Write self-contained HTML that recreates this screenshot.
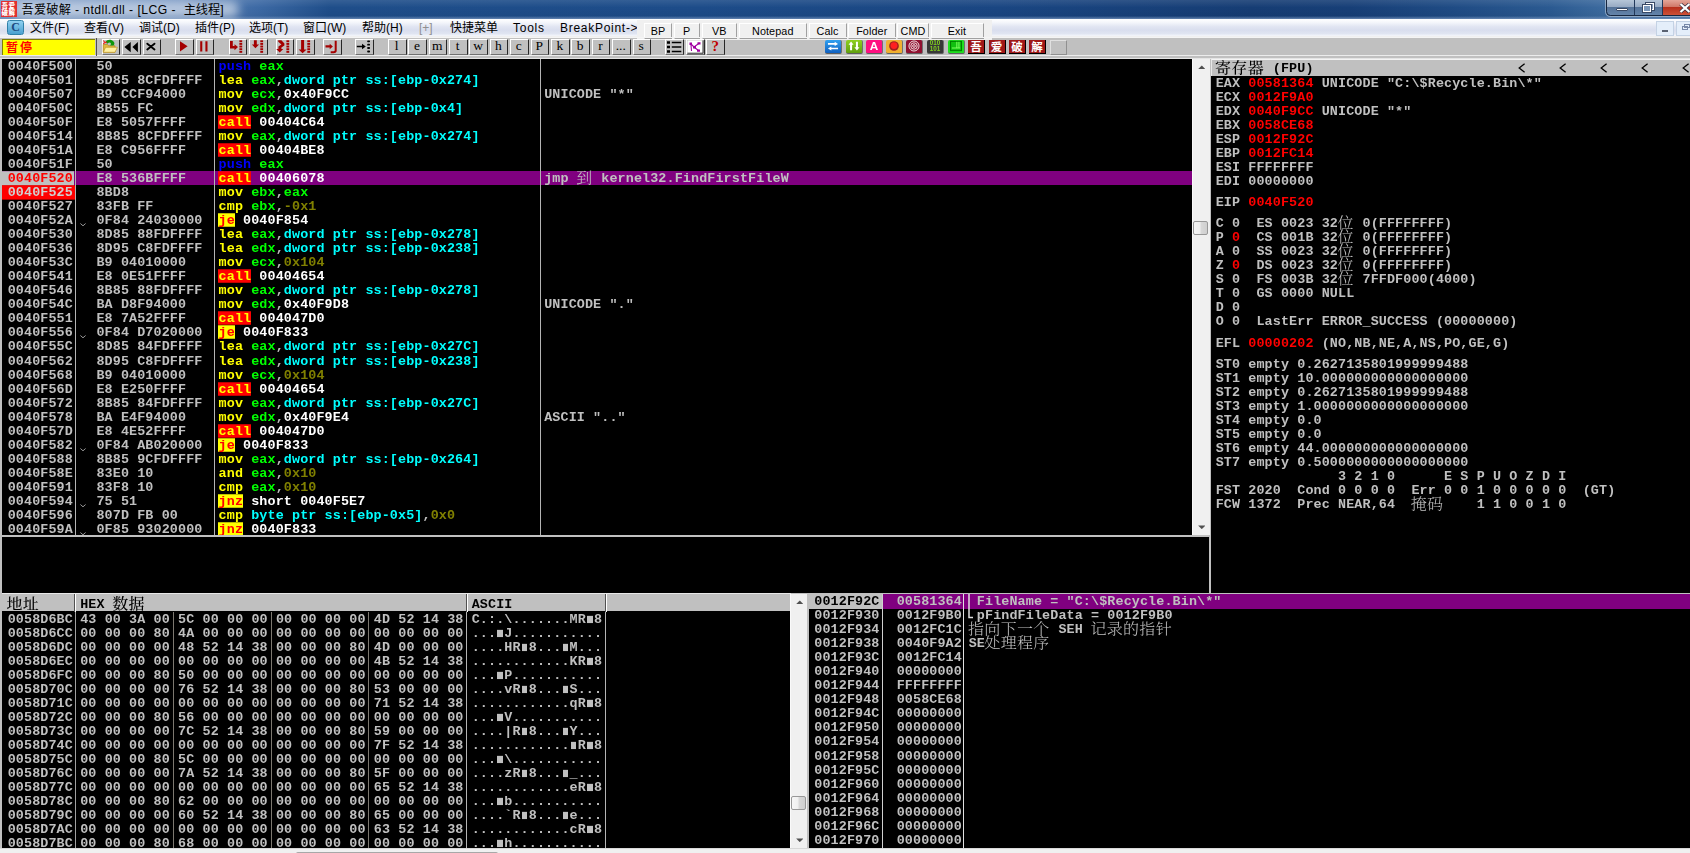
<!DOCTYPE html>
<html lang="zh-CN"><head><meta charset="utf-8"><title>吾爱破解 - ntdll.dll - [LCG - 主线程]</title>
<style>
html,body{margin:0;padding:0;}
body{width:1690px;height:853px;overflow:hidden;background:#c0c0c0;position:relative;font-family:"Liberation Sans","Noto Sans CJK SC",sans-serif;}
div,span,svg{box-sizing:border-box}
.abs{position:absolute}
.m{font-family:"Liberation Mono","Noto Serif CJK SC",monospace;font-weight:bold;font-size:13.4px;letter-spacing:0.12px;white-space:pre;line-height:14px;height:14px;color:#c0c0c0;position:absolute;top:0.6px;z-index:0;-webkit-text-stroke:0;margin-left:0.2px;transform:scaleY(0.9);transform-origin:0 10.57px}
.k{display:inline-block;width:16.32px;height:14px;letter-spacing:0;font-family:"Noto Serif CJK SC","Noto Sans CJK SC",serif;font-weight:300;font-size:16px;line-height:14px;text-align:center;vertical-align:top;position:relative;top:-1.9px;left:-0.8px;-webkit-text-stroke:0}
.pane{position:absolute;background:#000;overflow:hidden;will-change:transform}
.r{position:absolute;left:0;width:100%;height:14.1px}
.vl{position:absolute;width:1px;background:#b4b4b4}
/* disasm columns (relative to pane left=2) */
#dis .a{left:5.5px}
#dis .h{left:94.25px}
#dis .d{left:216.4px}
#dis .cm{left:542px}
#dis .jm{position:absolute;left:77.5px;top:9.5px}
#dis .sel{background:#800080}
#dis .aeip{top:-1.17px;height:15.61px;padding-top:1.77px;transform-origin:0 12.34px;left:-2px;padding-left:7.5px;width:74px;background:#c0c0c0;color:#ff0000}
#dis .abp{top:-1.17px;height:15.61px;padding-top:1.77px;transform-origin:0 12.34px;left:0;padding-left:5.5px;width:72.5px;background:#ff0000;color:#d0d0d0}
.b{color:#0000ff}.y{color:#ffff00}.g{color:#00ff00}.c{color:#00ffff}.w{color:#ffffff}.o{color:#808000}.rd{color:#ff0000}
.cl,.jc{position:relative}
.cl{color:#ffff00}.jc{color:#ff0000}
.cl::before,.jc::before{content:"";position:absolute;left:-0.3px;right:0.3px;top:-1.25px;height:15.61px;z-index:-1}
.cl::before{background:#ff0000}.jc::before{background:#ffff00}
/* registers */
#reg .rg{left:4.5px}
/* dump */
#dump .a{left:5.5px}
#dump .dh{left:78px}
#dump .da{left:469.5px}
.bx{display:inline-block;width:5.6px;height:8.9px;background:#c0c0c0;margin:0 1.28px;vertical-align:top;position:relative;top:1.6px}
/* stack */
#stk .sa{left:5.1px}
#stk .sv{left:87.5px}
#stk .sc{left:159.5px}
#stk .ssel{background:#800080}
#stk .ssel .sa{color:#000}
.sabg{position:absolute;left:-2px;top:-1.5px;width:74.5px;height:16px;background:#c0c0c0}
.hdr{position:absolute;background:#c0c0c0;color:#000}
.hdr .m{color:#000}
.hdr .k{color:#000;font-weight:500}
/* scrollbars */
.sb{position:absolute;background:#f0f0f0;border-left:1px solid #fafafa}
.thumb{position:absolute;border:1px solid #989898;border-radius:2px;background:linear-gradient(90deg,#f6f6f6 0%,#f0f0f0 45%,#d8d8d8 55%,#cfcfcf 100%)}
/* toolbar */
.tb{position:absolute;top:38.7px;height:16px;width:18.5px;background:#c0c0c0;border-top:1.2px solid #fff;border-left:1.2px solid #fff;border-right:1.3px solid #282828;border-bottom:1.3px solid #707070}
.tb svg{position:absolute;left:0;top:0}
.tl{font-family:"Liberation Serif",serif;font-size:13.5px;color:#000;text-align:center;line-height:12.5px;padding-right:1px}
.pb{position:absolute;top:22.6px;height:16.8px;background:#f0f0f0;border-top:1px solid #fff;border-left:1px solid #fff;border-right:1.5px solid #a0a0a0;border-bottom:1.5px solid #a0a0a0;font-size:10.8px;letter-spacing:0.1px;line-height:15.5px;text-align:center;color:#000;font-family:"Liberation Sans",sans-serif}
.mi{position:absolute;top:19.5px;height:16px;line-height:16px;font-size:12px;color:#000;white-space:pre;font-family:"Liberation Sans","Noto Sans CJK SC",sans-serif}
</style></head><body>
<div class="abs" style="left:0;top:0;width:1690px;height:19px;background:linear-gradient(90deg,#7d9bc6 0px,#6f90bf 40px,#5f84b8 180px,#3c69a4 260px,#1f4e8a 330px,#1d4c89 700px,#1a4682 1000px,#163d74 1250px,#173f77 1350px,#1f4b84 1450px,#2b5a91 1550px,#3d6b9f 1606px)"></div>
<div class="abs" style="left:0;top:0;width:1690px;height:19px;background:linear-gradient(rgba(255,255,255,0.10),rgba(255,255,255,0) 40%,rgba(0,0,0,0.05) 90%,rgba(0,0,20,0.35))"></div>
<div class="abs" style="left:0;top:16.3px;width:1690px;height:2.4px;background:linear-gradient(rgba(130,165,210,0),rgba(130,165,210,0.75))"></div><div class="abs" style="left:0;top:18.6px;width:1690px;height:0.9px;background:#566880"></div>
<div class="abs" style="left:14px;top:1px;width:225px;height:17px;background:rgba(255,255,255,0.55);filter:blur(5px);border-radius:8px"></div>
<div class="abs" style="left:0.5px;top:1px;width:16px;height:16px;background:#e03030;color:#fff;font-size:6.5px;line-height:7.5px;font-weight:900;font-family:'Noto Sans CJK SC',sans-serif;overflow:hidden;text-align:center;letter-spacing:0.5px;padding-top:0.5px">吾爱<br>破解</div>
<div class="abs" style="left:21.5px;top:1.5px;height:17px;line-height:17px;font-size:12.2px;color:#000;white-space:pre;font-family:'Liberation Sans','Noto Sans CJK SC',sans-serif"><span style="letter-spacing:0.2px">吾爱破解</span><span style="letter-spacing:0.45px"> - ntdll.dll - [LCG -  </span><span>主线程]</span></div>
<div class="abs" style="left:1606px;top:-1px;width:90px;height:16.5px;border:1px solid #16263f;border-radius:0 0 0 4.5px;background:linear-gradient(#b6c6d8 0%,#98abc4 45%,#557399 50%,#6484aa 100%);box-shadow:0 0 0 1px rgba(255,255,255,0.4)"></div>
<div class="abs" style="left:1662.5px;top:0;width:30px;height:14.5px;background:linear-gradient(#e4a598 0%,#d07868 45%,#b8301c 50%,#cc5238 100%)"></div>
<div class="abs" style="left:1634px;top:0;width:1.2px;height:14.5px;background:#22385a"></div>
<div class="abs" style="left:1662px;top:0;width:1.2px;height:14.5px;background:#22385a"></div>
<div class="abs" style="left:1616px;top:8px;width:11.5px;height:3.2px;background:#fff;border:0.6px solid #3a4a66;border-radius:1px"></div>
<div class="abs" style="left:1645.5px;top:3px;width:8.5px;height:7px;border:1.6px solid #fff;outline:0.6px solid #3a4a66;background:#8aa2c2"></div>
<div class="abs" style="left:1642.5px;top:5.3px;width:8.5px;height:7px;border:1.6px solid #fff;outline:0.6px solid #3a4a66;background:#7c98ba"></div>
<svg class="abs" style="left:1679px;top:3px" width="12" height="10" viewBox="0 0 12 10"><path d="M1.5 1 L10.5 9 M10.5 1 L1.5 9" stroke="#3a3040" stroke-width="3.6"/><path d="M1.5 1 L10.5 9 M10.5 1 L1.5 9" stroke="#fff" stroke-width="2.3"/></svg>
<div class="abs" style="left:0;top:18.5px;width:1690px;height:18px;background:linear-gradient(#ffffff 0%,#f4f6fb 20%,#e1e5f2 45%,#d9deee 65%,#dfe4f1 85%,#f4f6fb 100%);border-bottom:1px solid #f0f0f0"></div>
<div class="abs" style="left:7px;top:20px;width:17px;height:14.5px;border:1px solid #3080a8;border-radius:2.5px;background:linear-gradient(#8fd0f0,#4aa0d0);font-family:'Liberation Serif',serif;font-weight:bold;font-size:12px;line-height:12px;color:#1c4a80;text-align:center">C</div>
<div class="mi" style="left:30px">文件(F)</div>
<div class="mi" style="left:84px">查看(V)</div>
<div class="mi" style="left:139px">调试(D)</div>
<div class="mi" style="left:195px">插件(P)</div>
<div class="mi" style="left:249px">选项(T)</div>
<div class="mi" style="left:303px">窗口(W)</div>
<div class="mi" style="left:362px">帮助(H)</div>
<div class="mi" style="left:419px;color:#909090">[+]</div>
<div class="mi" style="left:450px">快捷菜单</div>
<div class="mi" style="left:513px;font-size:12px;letter-spacing:0.75px">Tools</div>
<div class="mi" style="left:560px;font-size:12px;letter-spacing:0.72px">BreakPoint-&gt;</div>
<div class="abs" style="left:637px;top:20px;width:354.5px;height:20.4px;background:#f0f0f0"></div>
<div class="pb" style="left:644px;width:28px">BP</div>
<div class="pb" style="left:673.5px;width:26.5px">P</div>
<div class="pb" style="left:701.5px;width:35.5px">VB</div>
<div class="pb" style="left:738.5px;width:68.5px">Notepad</div>
<div class="pb" style="left:808.5px;width:38px">Calc</div>
<div class="pb" style="left:848px;width:47.5px">Folder</div>
<div class="pb" style="left:897px;width:32px">CMD</div>
<div class="pb" style="left:930.5px;width:53px">Exit</div>
<div class="abs" style="left:1656px;top:20.5px;width:17.5px;height:15px;background:#e4eefa;border:1px solid #c4d2e4"></div><div class="abs" style="left:1661.5px;top:30px;width:6px;height:1.5px;background:#5a6272"></div>
<div class="abs" style="left:1675.5px;top:20.5px;width:17.5px;height:15px;background:#e4eefa;border:1px solid #c4d2e4"></div><div class="abs" style="left:1682px;top:26px;width:6px;height:4px;border:1px solid #7888a8;border-top-width:1.5px"></div><div class="abs" style="left:1684px;top:24px;width:6px;height:4px;border:1px solid #7888a8;border-top-width:1.5px"></div>
<div class="abs" style="left:0;top:37px;width:1690px;height:1px;background:#f4f4f4"></div>
<div class="abs" style="left:0;top:54.5px;width:1690px;height:1px;background:#ececec"></div>
<div class="abs" style="left:0;top:57.8px;width:1690px;height:1px;background:#e4e4e4"></div>
<div class="abs" style="left:2px;top:38.5px;width:93px;height:16.5px;background:#ffff00;border-top:1px solid #808000;border-left:1px solid #808000"></div>
<div class="abs" style="left:6px;top:38px;height:17px;line-height:17px;font-size:12px;color:#ff0000;font-weight:bold;letter-spacing:2px;font-family:'Noto Sans CJK SC',sans-serif">暂停</div>
<div class="abs" style="left:96.2px;top:38px;width:1px;height:18px;background:#505050"></div>
<div class="tb" style="left:101.5px;"><svg width="18.5" height="16" viewBox="0 0 18.5 16" style="left:-1.2px;top:-1.2px"><path d="M2.2 5.5 L6.5 5.5 L7.5 6.8 L14 6.8 L14 13.2 L2.2 13.2 Z" fill="#e0b840" stroke="#b08820" stroke-width="0.7"/><path d="M4.6 8.3 L16.4 8.3 L14 13.3 L2.3 13.3 Z" fill="#fff0a0" stroke="#c09828" stroke-width="0.7"/><path d="M4.5 3.2 C6 0.2 10.5 0.2 12.5 2.5 C13.8 3.6 13.6 5.4 12.6 6.4 L9 6.4 C10.5 5 10 3.6 8.5 3.4 C7.5 3.3 6.5 4.2 6.2 4.8 Z" fill="#0c960c"/><path d="M2 1.6 L4.6 3.6 L2 4.8 M3 3.4 L6 3.2" stroke="#ff1818" stroke-width="0.9" fill="none"/></svg></div>
<div class="tb" style="left:122px;"><svg width="18.5" height="16" viewBox="0 0 18.5 16" style="left:-1.2px;top:-1.2px"><path d="M2.4 8.1 L8.7 3 L8.7 13.2 Z M10.4 8.1 L15.9 3 L15.9 13.2 Z" fill="#000"/></svg></div>
<div class="tb" style="left:142.5px;"><svg width="18.5" height="16" viewBox="0 0 18.5 16" style="left:-1.2px;top:-1.2px"><path d="M5.3 4.7 L12.5 10.4 M12.5 4.7 L5.3 10.4" stroke="#000" stroke-width="1.9" stroke-linecap="round"/></svg></div>
<div class="tb" style="left:175px;"><svg width="18.5" height="16" viewBox="0 0 18.5 16" style="left:-1.2px;top:-1.2px"><path d="M5 2.3 L12.6 7.3 L5 12.4 Z" fill="#a40000"/></svg></div>
<div class="tb" style="left:195.5px;"><svg width="18.5" height="16" viewBox="0 0 18.5 16" style="left:-1.2px;top:-1.2px"><path d="M5.2 2.3 H7.3 V12.4 H5.2 Z M10.4 2.3 H12.5 V12.4 H10.4 Z" fill="#a40000"/></svg></div>
<div class="tb" style="left:228.5px;"><svg width="18.5" height="16" viewBox="0 0 18.5 16" style="left:-1.2px;top:-1.2px"><path d="M2 2 H4.8 V7 H6.5 V5.2 L10 8.1 L6.5 11.3 V9.6 H2 Z" fill="#a40000"/><rect x="11.4" y="1.3" width="2.8" height="1.9" fill="#a40000"/><rect x="11.4" y="3.95" width="2.8" height="1.9" fill="#a40000"/><rect x="11.4" y="6.6" width="2.8" height="1.9" fill="#a40000"/><rect x="11.4" y="9.25" width="2.8" height="1.9" fill="#a40000"/><rect x="11.4" y="11.9" width="2.8" height="1.9" fill="#a40000"/></svg></div>
<div class="tb" style="left:249px;"><svg width="18.5" height="16" viewBox="0 0 18.5 16" style="left:-1.2px;top:-1.2px"><path d="M4.9 1.3 H7.8 V5.5 H10.1 L6.4 9.3 L2.9 5.5 H4.9 Z" fill="#a40000"/><rect x="11.3" y="1.3" width="2.8" height="1.9" fill="#a40000"/><rect x="11.3" y="3.95" width="2.8" height="1.9" fill="#a40000"/><rect x="11.3" y="6.6" width="2.8" height="1.9" fill="#a40000"/><rect x="11.3" y="9.25" width="2.8" height="1.9" fill="#a40000"/><rect x="11.3" y="11.9" width="2.8" height="1.9" fill="#a40000"/></svg></div>
<div class="tb" style="left:275.5px;"><svg width="18.5" height="16" viewBox="0 0 18.5 16" style="left:-1.2px;top:-1.2px"><path d="M3.2 1.3 H6.4 L9.4 4.4 V6.4 L6.4 8.4 L6.4 10 H8.3 L4.7 13.4 L1.2 10 H3.4 V7.4 L6.4 5.4 L3.2 2.8 Z" fill="#a40000"/><rect x="11.4" y="1.3" width="2.8" height="1.9" fill="#a40000"/><rect x="11.4" y="3.95" width="2.8" height="1.9" fill="#a40000"/><rect x="11.4" y="6.6" width="2.8" height="1.9" fill="#a40000"/><rect x="11.4" y="9.25" width="2.8" height="1.9" fill="#a40000"/><rect x="11.4" y="11.9" width="2.8" height="1.9" fill="#a40000"/></svg></div>
<div class="tb" style="left:296px;"><svg width="18.5" height="16" viewBox="0 0 18.5 16" style="left:-1.2px;top:-1.2px"><path d="M5.1 1 H8.1 V10.5 H10.6 L6.6 14.3 L2.6 10.5 H5.1 Z" fill="#a40000"/><rect x="11.3" y="1.3" width="2.8" height="1.9" fill="#a40000"/><rect x="11.3" y="3.95" width="2.8" height="1.9" fill="#a40000"/><rect x="11.3" y="6.6" width="2.8" height="1.9" fill="#a40000"/><rect x="11.3" y="9.25" width="2.8" height="1.9" fill="#a40000"/><rect x="11.3" y="11.9" width="2.8" height="1.9" fill="#a40000"/></svg></div>
<div class="tb" style="left:323px;"><svg width="18.5" height="16" viewBox="0 0 18.5 16" style="left:-1.2px;top:-1.2px"><path d="M2.5 6.3 H6.7 V4.8 L9.9 7.5 L6.7 10.3 V8.6 H2.5 Z" fill="#a40000"/><path d="M12.7 1.8 V11.5 Q12.7 13.3 10.5 13.3 H7.7" stroke="#a40000" stroke-width="2" fill="none"/></svg></div>
<div class="tb" style="left:355px;"><svg width="18.5" height="16" viewBox="0 0 18.5 16" style="left:-1.2px;top:-1.2px"><path d="M1.8 6.8 H7 V4.8 L10.8 7.5 L7 10.3 V8.3 H1.8 Z" fill="#000"/><rect x="12.2" y="1.4" width="2.8" height="1.9" rx="0.7" fill="#000"/><rect x="12.2" y="4.7" width="2.8" height="1.9" rx="0.7" fill="#000"/><rect x="12.2" y="8.0" width="2.8" height="1.9" rx="0.7" fill="#000"/><rect x="12.2" y="11.6" width="2.8" height="1.9" rx="0.7" fill="#000"/></svg></div>
<div class="tb tl" style="left:388px">l</div>
<div class="tb tl" style="left:408.3px">e</div>
<div class="tb tl" style="left:428.5px">m</div>
<div class="tb tl" style="left:449px">t</div>
<div class="tb tl" style="left:469.3px">w</div>
<div class="tb tl" style="left:489.7px">h</div>
<div class="tb tl" style="left:510px">c</div>
<div class="tb tl" style="left:530.5px">P</div>
<div class="tb tl" style="left:551px">k</div>
<div class="tb tl" style="left:571.3px">b</div>
<div class="tb tl" style="left:591.7px">r</div>
<div class="tb tl" style="left:612px">...</div>
<div class="tb tl" style="left:632.5px">s</div>
<div class="tb" style="left:665px;"><svg width="18.5" height="16" viewBox="0 0 18.5 16" style="left:-1.2px;top:-1.2px"><path d="M2 2.2 H5 V4.8 H2 Z M2 6.7 H5 V9.3 H2 Z M2 11.2 H5 V13.8 H2 Z" fill="#000"/><path d="M6.8 3.5 H16.3 M6.8 8 H16.3 M6.8 12.5 H16.3" stroke="#000" stroke-width="1.5"/></svg></div>
<div class="tb" style="left:686px;"><svg width="18.5" height="16" viewBox="0 0 18.5 16" style="left:-1.2px;top:-1.2px"><rect x="1.4" y="1.4" width="15.6" height="13" fill="#fff"/><path d="M1.4 14.2 H17 V1.4" fill="none" stroke="#202020" stroke-width="0.9"/><path d="M3.5 3.5 H6 V6 H3.5Z M11.5 3.3 H14.5 V5.5 H11.5Z M7 7 H10 V9.5 H7Z M11 10.5 H14 V12.8 H11Z" fill="#a000a0"/><path d="M5 5 L8 8 L12.8 4.5 M8.5 8.5 L12.5 11.5 M5 6 L5.5 12" stroke="#a000a0" stroke-width="1.1" fill="none"/></svg></div>
<div class="tb" style="left:706px;font-family:'Liberation Serif',serif;font-weight:bold;font-size:15px;line-height:13.5px;text-align:center;color:#c00000">?</div>
<div class="abs" style="left:825px;top:39.8px;width:17px;height:14.4px;background:linear-gradient(#30a0f0,#1060c0);border-radius:2px;border-right:1px solid #707070;border-bottom:1.2px solid #606060;overflow:hidden"><div style="position:absolute;left:0;top:-0.6px;width:16px;height:14px;transform:scale(0.84)"><svg width="16" height="14" viewBox="0 0 16 14"><path d="M2 3.5 H10 V2 L14 4.5 L10 7 V5.5 H2 Z M14 9 H6 V7.5 L2 10 L6 12.5 V11 H14 Z" fill="#fff"/></svg></div></div>
<div class="abs" style="left:845.5px;top:39.8px;width:17px;height:14.4px;background:linear-gradient(#90d020,#60a010);border-radius:2px;border-right:1px solid #707070;border-bottom:1.2px solid #606060;overflow:hidden"><div style="position:absolute;left:0;top:-0.6px;width:16px;height:14px;transform:scale(0.84)"><svg width="16" height="14" viewBox="0 0 16 14"><path d="M4.5 1.5 L7.5 5.5 H5.7 V12 H3.3 V5.5 H1.5 Z M11.5 12.5 L8.5 8.5 H10.3 V2 H12.7 V8.5 H14.5 Z" fill="#fff"/></svg></div></div>
<div class="abs" style="left:865.5px;top:39.8px;width:17px;height:14.4px;background:#ff1080;border-radius:2px;border-right:1px solid #707070;border-bottom:1.2px solid #606060;overflow:hidden"><div style="position:absolute;left:0;top:-0.6px;width:16px;height:14px;transform:scale(0.84)"><div style="color:#fff;font-weight:bold;font-size:14px;line-height:14px;text-align:center;font-family:'Liberation Sans',sans-serif">A</div></div></div>
<div class="abs" style="left:886px;top:39.8px;width:17px;height:14.4px;background:#f0b030;border-radius:2px;border-right:1px solid #707070;border-bottom:1.2px solid #606060;overflow:hidden"><div style="position:absolute;left:0;top:-0.6px;width:16px;height:14px;transform:scale(0.84)"><svg width="16" height="14" viewBox="0 0 16 14"><circle cx="8" cy="7" r="5.8" fill="#a02020"/><circle cx="8" cy="6.5" r="4" fill="#ff2020"/></svg></div></div>
<div class="abs" style="left:906px;top:39.8px;width:17px;height:14.4px;background:#901030;border-radius:2px;border-right:1px solid #707070;border-bottom:1.2px solid #606060;overflow:hidden"><div style="position:absolute;left:0;top:-0.6px;width:16px;height:14px;transform:scale(0.84)"><svg width="16" height="14" viewBox="0 0 16 14"><circle cx="8" cy="7" r="6" fill="none" stroke="#fff" stroke-width="1"/><circle cx="8" cy="7" r="3.8" fill="none" stroke="#fff" stroke-width="1"/><circle cx="8" cy="7" r="1.6" fill="none" stroke="#fff" stroke-width="1"/></svg></div></div>
<div class="abs" style="left:927px;top:39.8px;width:17px;height:14.4px;background:#383838;border-radius:2px;border-right:1px solid #707070;border-bottom:1.2px solid #606060;overflow:hidden"><div style="position:absolute;left:0;top:-0.6px;width:16px;height:14px;transform:scale(0.84)"><div style="color:#80d020;font-weight:bold;font-size:7.5px;line-height:7px;text-align:center;font-family:'Liberation Sans',sans-serif">010<br>101</div></div></div>
<div class="abs" style="left:947.5px;top:39.8px;width:17px;height:14.4px;background:#20e020;border-radius:2px;border-right:1px solid #707070;border-bottom:1.2px solid #606060;overflow:hidden"><div style="position:absolute;left:0;top:-0.6px;width:16px;height:14px;transform:scale(0.84)"><svg width="16" height="14" viewBox="0 0 16 14"><rect x="1.5" y="1.5" width="13" height="11" fill="#10c010" stroke="#008000" stroke-width="1.3"/><path d="M3 9.5 H13 M9 2 V9.5 M11.5 2 V9.5" stroke="#80ff60" stroke-width="1.2" fill="none"/></svg></div></div>
<div class="abs" style="left:968px;top:39.8px;width:17px;height:14.4px;background:#a01818;border-right:1.5px solid #000;border-bottom:1.5px solid #000;color:#fff;font-weight:700;font-size:11.5px;line-height:12.5px;text-align:center;font-family:'Noto Sans CJK SC',sans-serif;overflow:hidden">吾</div>
<div class="abs" style="left:988.5px;top:39.8px;width:17px;height:14.4px;background:#a01818;border-right:1.5px solid #000;border-bottom:1.5px solid #000;color:#fff;font-weight:700;font-size:11.5px;line-height:12.5px;text-align:center;font-family:'Noto Sans CJK SC',sans-serif;overflow:hidden">爱</div>
<div class="abs" style="left:1009px;top:39.8px;width:17px;height:14.4px;background:#a01818;border-right:1.5px solid #000;border-bottom:1.5px solid #000;color:#fff;font-weight:700;font-size:11.5px;line-height:12.5px;text-align:center;font-family:'Noto Sans CJK SC',sans-serif;overflow:hidden">破</div>
<div class="abs" style="left:1029px;top:39.8px;width:17px;height:14.4px;background:#a01818;border-right:1.5px solid #000;border-bottom:1.5px solid #000;color:#fff;font-weight:700;font-size:11.5px;line-height:12.5px;text-align:center;font-family:'Noto Sans CJK SC',sans-serif;overflow:hidden">解</div>
<div class="abs" style="left:1049.5px;top:39.5px;width:17.5px;height:15px;background:#c0c0c0;border-top:1px solid #e0e0e0;border-left:1px solid #e0e0e0;border-right:1px solid #909090;border-bottom:1px solid #909090"></div>
<div id="dis" class="pane" style="left:2px;top:58.8px;width:1189.5px;height:476.3px"><div style="position:absolute;left:0;top:-58.8px;width:100%;height:600px">
<div class="r" style="top:58.8px">
<span class="m a">0040F500</span>
<span class="m h">50</span>
<span class="m d"><span class="b">push</span> <span class="g">eax</span></span>
</div>
<div class="r" style="top:72.84px">
<span class="m a">0040F501</span>
<span class="m h">8D85 8CFDFFFF</span>
<span class="m d"><span class="y">lea</span> <span class="g">eax</span>,<span class="c">dword ptr ss:[ebp-0x274]</span></span>
</div>
<div class="r" style="top:86.89px">
<span class="m a">0040F507</span>
<span class="m h">B9 CCF94000</span>
<span class="m d"><span class="y">mov</span> <span class="g">ecx</span>,<span class="w">0x40F9CC</span></span>
<span class="m cm">UNICODE "*"</span>
</div>
<div class="r" style="top:100.94px">
<span class="m a">0040F50C</span>
<span class="m h">8B55 FC</span>
<span class="m d"><span class="y">mov</span> <span class="g">edx</span>,<span class="c">dword ptr ss:[ebp-0x4]</span></span>
</div>
<div class="r" style="top:114.98px">
<span class="m a">0040F50F</span>
<span class="m h">E8 5057FFFF</span>
<span class="m d"><span class="cl">call</span> <span class="w">00404C64</span></span>
</div>
<div class="r" style="top:129.02px">
<span class="m a">0040F514</span>
<span class="m h">8B85 8CFDFFFF</span>
<span class="m d"><span class="y">mov</span> <span class="g">eax</span>,<span class="c">dword ptr ss:[ebp-0x274]</span></span>
</div>
<div class="r" style="top:143.07px">
<span class="m a">0040F51A</span>
<span class="m h">E8 C956FFFF</span>
<span class="m d"><span class="cl">call</span> <span class="w">00404BE8</span></span>
</div>
<div class="r" style="top:157.12px">
<span class="m a">0040F51F</span>
<span class="m h">50</span>
<span class="m d"><span class="b">push</span> <span class="g">eax</span></span>
</div>
<div class="r sel" style="top:171.16px">
<span class="m a aeip">0040F520</span>
<span class="m h">E8 536BFFFF</span>
<span class="m d"><span class="cl">call</span> <span class="w">00406078</span></span>
<span class="m cm">jmp <span class="k">到</span> kernel32.FindFirstFileW</span>
</div>
<div class="r" style="top:185.2px">
<span class="m a abp">0040F525</span>
<span class="m h">8BD8</span>
<span class="m d"><span class="y">mov</span> <span class="g">ebx</span>,<span class="g">eax</span></span>
</div>
<div class="r" style="top:199.25px">
<span class="m a">0040F527</span>
<span class="m h">83FB FF</span>
<span class="m d"><span class="y">cmp</span> <span class="g">ebx</span>,<span class="o">-0x1</span></span>
</div>
<div class="r" style="top:213.3px">
<span class="m a">0040F52A</span>
<svg class="jm" width="6" height="4" viewBox="0 0 6 4"><path d="M0.4 0.5 L3 2.8 L5.6 0.5" fill="none" stroke="#a8a8a8" stroke-width="0.9"/></svg>
<span class="m h">0F84 24030000</span>
<span class="m d"><span class="jc">je</span> <span class="w">0040F854</span></span>
</div>
<div class="r" style="top:227.34px">
<span class="m a">0040F530</span>
<span class="m h">8D85 88FDFFFF</span>
<span class="m d"><span class="y">lea</span> <span class="g">eax</span>,<span class="c">dword ptr ss:[ebp-0x278]</span></span>
</div>
<div class="r" style="top:241.38px">
<span class="m a">0040F536</span>
<span class="m h">8D95 C8FDFFFF</span>
<span class="m d"><span class="y">lea</span> <span class="g">edx</span>,<span class="c">dword ptr ss:[ebp-0x238]</span></span>
</div>
<div class="r" style="top:255.43px">
<span class="m a">0040F53C</span>
<span class="m h">B9 04010000</span>
<span class="m d"><span class="y">mov</span> <span class="g">ecx</span>,<span class="o">0x104</span></span>
</div>
<div class="r" style="top:269.48px">
<span class="m a">0040F541</span>
<span class="m h">E8 0E51FFFF</span>
<span class="m d"><span class="cl">call</span> <span class="w">00404654</span></span>
</div>
<div class="r" style="top:283.52px">
<span class="m a">0040F546</span>
<span class="m h">8B85 88FDFFFF</span>
<span class="m d"><span class="y">mov</span> <span class="g">eax</span>,<span class="c">dword ptr ss:[ebp-0x278]</span></span>
</div>
<div class="r" style="top:297.56px">
<span class="m a">0040F54C</span>
<span class="m h">BA D8F94000</span>
<span class="m d"><span class="y">mov</span> <span class="g">edx</span>,<span class="w">0x40F9D8</span></span>
<span class="m cm">UNICODE "."</span>
</div>
<div class="r" style="top:311.61px">
<span class="m a">0040F551</span>
<span class="m h">E8 7A52FFFF</span>
<span class="m d"><span class="cl">call</span> <span class="w">004047D0</span></span>
</div>
<div class="r" style="top:325.66px">
<span class="m a">0040F556</span>
<svg class="jm" width="6" height="4" viewBox="0 0 6 4"><path d="M0.4 0.5 L3 2.8 L5.6 0.5" fill="none" stroke="#a8a8a8" stroke-width="0.9"/></svg>
<span class="m h">0F84 D7020000</span>
<span class="m d"><span class="jc">je</span> <span class="w">0040F833</span></span>
</div>
<div class="r" style="top:339.7px">
<span class="m a">0040F55C</span>
<span class="m h">8D85 84FDFFFF</span>
<span class="m d"><span class="y">lea</span> <span class="g">eax</span>,<span class="c">dword ptr ss:[ebp-0x27C]</span></span>
</div>
<div class="r" style="top:353.75px">
<span class="m a">0040F562</span>
<span class="m h">8D95 C8FDFFFF</span>
<span class="m d"><span class="y">lea</span> <span class="g">edx</span>,<span class="c">dword ptr ss:[ebp-0x238]</span></span>
</div>
<div class="r" style="top:367.79px">
<span class="m a">0040F568</span>
<span class="m h">B9 04010000</span>
<span class="m d"><span class="y">mov</span> <span class="g">ecx</span>,<span class="o">0x104</span></span>
</div>
<div class="r" style="top:381.84px">
<span class="m a">0040F56D</span>
<span class="m h">E8 E250FFFF</span>
<span class="m d"><span class="cl">call</span> <span class="w">00404654</span></span>
</div>
<div class="r" style="top:395.88px">
<span class="m a">0040F572</span>
<span class="m h">8B85 84FDFFFF</span>
<span class="m d"><span class="y">mov</span> <span class="g">eax</span>,<span class="c">dword ptr ss:[ebp-0x27C]</span></span>
</div>
<div class="r" style="top:409.93px">
<span class="m a">0040F578</span>
<span class="m h">BA E4F94000</span>
<span class="m d"><span class="y">mov</span> <span class="g">edx</span>,<span class="w">0x40F9E4</span></span>
<span class="m cm">ASCII ".."</span>
</div>
<div class="r" style="top:423.97px">
<span class="m a">0040F57D</span>
<span class="m h">E8 4E52FFFF</span>
<span class="m d"><span class="cl">call</span> <span class="w">004047D0</span></span>
</div>
<div class="r" style="top:438.01px">
<span class="m a">0040F582</span>
<svg class="jm" width="6" height="4" viewBox="0 0 6 4"><path d="M0.4 0.5 L3 2.8 L5.6 0.5" fill="none" stroke="#a8a8a8" stroke-width="0.9"/></svg>
<span class="m h">0F84 AB020000</span>
<span class="m d"><span class="jc">je</span> <span class="w">0040F833</span></span>
</div>
<div class="r" style="top:452.06px">
<span class="m a">0040F588</span>
<span class="m h">8B85 9CFDFFFF</span>
<span class="m d"><span class="y">mov</span> <span class="g">eax</span>,<span class="c">dword ptr ss:[ebp-0x264]</span></span>
</div>
<div class="r" style="top:466.11px">
<span class="m a">0040F58E</span>
<span class="m h">83E0 10</span>
<span class="m d"><span class="y">and</span> <span class="g">eax</span>,<span class="o">0x10</span></span>
</div>
<div class="r" style="top:480.15px">
<span class="m a">0040F591</span>
<span class="m h">83F8 10</span>
<span class="m d"><span class="y">cmp</span> <span class="g">eax</span>,<span class="o">0x10</span></span>
</div>
<div class="r" style="top:494.19px">
<span class="m a">0040F594</span>
<svg class="jm" width="6" height="4" viewBox="0 0 6 4"><path d="M0.4 0.5 L3 2.8 L5.6 0.5" fill="none" stroke="#a8a8a8" stroke-width="0.9"/></svg>
<span class="m h">75 51</span>
<span class="m d"><span class="jc">jnz</span> <span class="w">short 0040F5E7</span></span>
</div>
<div class="r" style="top:508.24px">
<span class="m a">0040F596</span>
<span class="m h">807D FB 00</span>
<span class="m d"><span class="y">cmp</span> <span class="c">byte ptr ss:[ebp-0x5]</span>,<span class="o">0x0</span></span>
</div>
<div class="r" style="top:522.28px">
<span class="m a">0040F59A</span>
<svg class="jm" width="6" height="4" viewBox="0 0 6 4"><path d="M0.4 0.5 L3 2.8 L5.6 0.5" fill="none" stroke="#a8a8a8" stroke-width="0.9"/></svg>
<span class="m h">0F85 93020000</span>
<span class="m d"><span class="jc">jnz</span> <span class="w">0040F833</span></span>
</div>
<div class="vl" style="left:72.5px;top:58px;height:480px"></div><div class="vl" style="left:211.5px;top:58px;height:480px"></div><div class="vl" style="left:537.5px;top:58px;height:480px"></div>
</div></div>
<div class="sb" style="left:1191.5px;top:58.5px;width:18px;height:476.5px"></div>
<svg class="abs" style="left:1197.7px;top:64.6px" width="7.6" height="4.6" viewBox="0 0 8 5"><path d="M0 4.5 L4 0.5 L8 4.5 Z" fill="#505050"/></svg>
<svg class="abs" style="left:1197.7px;top:524.5px" width="7.6" height="4.6" viewBox="0 0 8 5"><path d="M0 0.5 L4 4.5 L8 0.5 Z" fill="#505050"/></svg>
<div class="thumb" style="left:1193px;top:221px;width:15px;height:14px"></div>
<div class="pane" style="left:2px;top:536.6px;width:1207px;height:56px"></div>
<div id="reg" class="pane" style="left:1211.3px;top:58.8px;width:480px;height:533.9px"><div style="position:absolute;left:0;top:-58.8px;width:100%;height:600px">
<div class="hdr" style="left:0;top:58.8px;width:480px;height:17px;border-top:1px solid #f4f4f4;border-left:1px solid #e8e8e8"><span class="m" style="left:3.5px;top:1.5px"><span class="k">寄</span><span class="k">存</span><span class="k">器</span> (FPU)</span>
<svg class="abs" style="left:305.80000000000007px;top:2.6px" width="8" height="10" viewBox="0 0 8 10"><path d="M6.6 0.8 L1.2 5 L6.6 9.2" fill="none" stroke="#000" stroke-width="1.3"/></svg>
<svg class="abs" style="left:346.80000000000007px;top:2.6px" width="8" height="10" viewBox="0 0 8 10"><path d="M6.6 0.8 L1.2 5 L6.6 9.2" fill="none" stroke="#000" stroke-width="1.3"/></svg>
<svg class="abs" style="left:387.80000000000007px;top:2.6px" width="8" height="10" viewBox="0 0 8 10"><path d="M6.6 0.8 L1.2 5 L6.6 9.2" fill="none" stroke="#000" stroke-width="1.3"/></svg>
<svg class="abs" style="left:428.80000000000007px;top:2.6px" width="8" height="10" viewBox="0 0 8 10"><path d="M6.6 0.8 L1.2 5 L6.6 9.2" fill="none" stroke="#000" stroke-width="1.3"/></svg>
<svg class="abs" style="left:469.80000000000007px;top:2.6px" width="8" height="10" viewBox="0 0 8 10"><path d="M6.6 0.8 L1.2 5 L6.6 9.2" fill="none" stroke="#000" stroke-width="1.3"/></svg>
</div>
<div class="m rg" style="top:76.5px">EAX <span class="rd">00581364</span> UNICODE "C:\$Recycle.Bin\*"</div>
<div class="m rg" style="top:90.55px">ECX <span class="rd">0012F9A0</span></div>
<div class="m rg" style="top:104.59px">EDX <span class="rd">0040F9CC</span> UNICODE "*"</div>
<div class="m rg" style="top:118.63px">EBX <span class="rd">0058CE68</span></div>
<div class="m rg" style="top:132.68px">ESP <span class="rd">0012F92C</span></div>
<div class="m rg" style="top:146.72px">EBP <span class="rd">0012FC14</span></div>
<div class="m rg" style="top:160.77px">ESI FFFFFFFF</div>
<div class="m rg" style="top:174.81px">EDI 00000000</div>
<div class="m rg" style="top:195.88px">EIP <span class="rd">0040F520</span></div>
<div class="m rg" style="top:216.95px">C 0  ES 0023 32<span class="k">位</span> 0(FFFFFFFF)</div>
<div class="m rg" style="top:231.0px">P <span class="rd">0</span>  CS 001B 32<span class="k">位</span> 0(FFFFFFFF)</div>
<div class="m rg" style="top:245.04px">A 0  SS 0023 32<span class="k">位</span> 0(FFFFFFFF)</div>
<div class="m rg" style="top:259.09px">Z <span class="rd">0</span>  DS 0023 32<span class="k">位</span> 0(FFFFFFFF)</div>
<div class="m rg" style="top:273.13px">S 0  FS 003B 32<span class="k">位</span> 7FFDF000(4000)</div>
<div class="m rg" style="top:287.18px">T 0  GS 0000 NULL</div>
<div class="m rg" style="top:301.22px">D 0</div>
<div class="m rg" style="top:315.26px">O 0  LastErr ERROR_SUCCESS (00000000)</div>
<div class="m rg" style="top:336.33px">EFL <span class="rd">00000202</span> (NO,NB,NE,A,NS,PO,GE,G)</div>
<div class="m rg" style="top:357.4px">ST0 empty 0.2627135801999999488</div>
<div class="m rg" style="top:371.44px">ST1 empty 10.000000000000000000</div>
<div class="m rg" style="top:385.49px">ST2 empty 0.2627135801999999488</div>
<div class="m rg" style="top:399.54px">ST3 empty 1.0000000000000000000</div>
<div class="m rg" style="top:413.58px">ST4 empty 0.0</div>
<div class="m rg" style="top:427.62px">ST5 empty 0.0</div>
<div class="m rg" style="top:441.67px">ST6 empty 44.000000000000000000</div>
<div class="m rg" style="top:455.71px">ST7 empty 0.5000000000000000000</div>
<div class="m rg" style="top:469.76px">               3 2 1 0      E S P U O Z D I</div>
<div class="m rg" style="top:483.81px">FST 2020  Cond 0 0 0 0  Err 0 0 1 0 0 0 0 0  (GT)</div>
<div class="m rg" style="top:497.85px">FCW 1372  Prec NEAR,64  <span class="k">掩</span><span class="k">码</span>    1 1 0 0 1 0</div>
</div></div>
<div id="dump" class="pane" style="left:2px;top:593px;width:788.5px;height:255px"><div style="position:absolute;left:0;top:-593px;width:100%;height:860px">
<div class="hdr" style="left:0;top:593px;width:788.5px;height:17.7px;border-top:1px solid #e8e8e8">
<span class="m" style="left:5px;top:3.5px"><span class="k">地</span><span class="k">址</span></span><span class="m" style="left:78px;top:3.5px">HEX <span class="k">数</span><span class="k">据</span></span><span class="m" style="left:469.5px;top:3.5px">ASCII</span>
<div class="abs" style="left:72.2px;top:0;width:2px;height:17.5px;border-left:1px solid #505050;border-right:1px solid #fff"></div>
<div class="abs" style="left:463.6px;top:0;width:2px;height:17.5px;border-left:1px solid #505050;border-right:1px solid #fff"></div>
<div class="abs" style="left:602.6px;top:0;width:2px;height:17.5px;border-left:1px solid #505050;border-right:1px solid #fff"></div>
</div>
<div class="r" style="top:612.0px"><span class="m a">0058D6BC</span><span class="m dh">43 00 3A 00 5C 00 00 00 00 00 00 00 4D 52 14 38</span><span class="m da">C.:.\.......MR<span class="bx"></span>8</span></div>
<div class="r" style="top:626.04px"><span class="m a">0058D6CC</span><span class="m dh">00 00 00 80 4A 00 00 00 00 00 00 00 00 00 00 00</span><span class="m da">...<span class="bx"></span>J...........</span></div>
<div class="r" style="top:640.09px"><span class="m a">0058D6DC</span><span class="m dh">00 00 00 00 48 52 14 38 00 00 00 80 4D 00 00 00</span><span class="m da">....HR<span class="bx"></span>8...<span class="bx"></span>M...</span></div>
<div class="r" style="top:654.13px"><span class="m a">0058D6EC</span><span class="m dh">00 00 00 00 00 00 00 00 00 00 00 00 4B 52 14 38</span><span class="m da">............KR<span class="bx"></span>8</span></div>
<div class="r" style="top:668.18px"><span class="m a">0058D6FC</span><span class="m dh">00 00 00 80 50 00 00 00 00 00 00 00 00 00 00 00</span><span class="m da">...<span class="bx"></span>P...........</span></div>
<div class="r" style="top:682.23px"><span class="m a">0058D70C</span><span class="m dh">00 00 00 00 76 52 14 38 00 00 00 80 53 00 00 00</span><span class="m da">....vR<span class="bx"></span>8...<span class="bx"></span>S...</span></div>
<div class="r" style="top:696.27px"><span class="m a">0058D71C</span><span class="m dh">00 00 00 00 00 00 00 00 00 00 00 00 71 52 14 38</span><span class="m da">............qR<span class="bx"></span>8</span></div>
<div class="r" style="top:710.32px"><span class="m a">0058D72C</span><span class="m dh">00 00 00 80 56 00 00 00 00 00 00 00 00 00 00 00</span><span class="m da">...<span class="bx"></span>V...........</span></div>
<div class="r" style="top:724.36px"><span class="m a">0058D73C</span><span class="m dh">00 00 00 00 7C 52 14 38 00 00 00 80 59 00 00 00</span><span class="m da">....|R<span class="bx"></span>8...<span class="bx"></span>Y...</span></div>
<div class="r" style="top:738.4px"><span class="m a">0058D74C</span><span class="m dh">00 00 00 00 00 00 00 00 00 00 00 00 7F 52 14 38</span><span class="m da">............<span class="bx"></span>R<span class="bx"></span>8</span></div>
<div class="r" style="top:752.45px"><span class="m a">0058D75C</span><span class="m dh">00 00 00 80 5C 00 00 00 00 00 00 00 00 00 00 00</span><span class="m da">...<span class="bx"></span>\...........</span></div>
<div class="r" style="top:766.5px"><span class="m a">0058D76C</span><span class="m dh">00 00 00 00 7A 52 14 38 00 00 00 80 5F 00 00 00</span><span class="m da">....zR<span class="bx"></span>8...<span class="bx"></span>_...</span></div>
<div class="r" style="top:780.54px"><span class="m a">0058D77C</span><span class="m dh">00 00 00 00 00 00 00 00 00 00 00 00 65 52 14 38</span><span class="m da">............eR<span class="bx"></span>8</span></div>
<div class="r" style="top:794.59px"><span class="m a">0058D78C</span><span class="m dh">00 00 00 80 62 00 00 00 00 00 00 00 00 00 00 00</span><span class="m da">...<span class="bx"></span>b...........</span></div>
<div class="r" style="top:808.63px"><span class="m a">0058D79C</span><span class="m dh">00 00 00 00 60 52 14 38 00 00 00 80 65 00 00 00</span><span class="m da">....`R<span class="bx"></span>8...<span class="bx"></span>e...</span></div>
<div class="r" style="top:822.67px"><span class="m a">0058D7AC</span><span class="m dh">00 00 00 00 00 00 00 00 00 00 00 00 63 52 14 38</span><span class="m da">............cR<span class="bx"></span>8</span></div>
<div class="r" style="top:836.72px"><span class="m a">0058D7BC</span><span class="m dh">00 00 00 80 68 00 00 00 00 00 00 00 00 00 00 00</span><span class="m da">...<span class="bx"></span>h...........</span></div>
<div class="vl" style="left:72.5px;top:611.5px;height:240px;background:#a0a0a0"></div>
<div class="vl" style="left:171px;top:611.5px;height:240px;background:#7c7870"></div>
<div class="vl" style="left:268.5px;top:611.5px;height:240px;background:#7c7870"></div>
<div class="vl" style="left:366px;top:611.5px;height:240px;background:#7c7870"></div>
<div class="vl" style="left:464px;top:611.5px;height:240px"></div><div class="vl" style="left:603px;top:611.5px;height:240px"></div>
</div></div>
<div class="sb" style="left:789.8px;top:593.8px;width:17.2px;height:254.2px"></div>
<svg class="abs" style="left:795.7px;top:599.8px" width="7.6" height="4.6" viewBox="0 0 8 5"><path d="M0 4.5 L4 0.5 L8 4.5 Z" fill="#505050"/></svg>
<svg class="abs" style="left:795.7px;top:837.5px" width="7.6" height="4.6" viewBox="0 0 8 5"><path d="M0 0.5 L4 4.5 L8 0.5 Z" fill="#505050"/></svg>
<div class="thumb" style="left:791px;top:796px;width:15px;height:14px"></div>
<div id="stk" class="pane" style="left:809px;top:594.2px;width:882px;height:254px"><div style="position:absolute;left:0;top:-594.2px;width:100%;height:860px">
<div class="r ssel" style="top:594.6px"><div class="sabg"></div><span class="m sa">0012F92C</span><span class="m sv">00581364</span><span class="m sc"> FileName = "C:\$Recycle.Bin\*"</span></div>
<div class="r" style="top:608.64px"><span class="m sa">0012F930</span><span class="m sv">0012F9B0</span><span class="m sc"> pFindFileData = 0012F9B0</span></div>
<div class="r" style="top:622.69px"><span class="m sa">0012F934</span><span class="m sv">0012FC1C</span><span class="m sc"><span class="k">指</span><span class="k">向</span><span class="k">下</span><span class="k">一</span><span class="k">个</span> SEH <span class="k">记</span><span class="k">录</span><span class="k">的</span><span class="k">指</span><span class="k">针</span></span></div>
<div class="r" style="top:636.74px"><span class="m sa">0012F938</span><span class="m sv">0040F9A2</span><span class="m sc">SE<span class="k">处</span><span class="k">理</span><span class="k">程</span><span class="k">序</span></span></div>
<div class="r" style="top:650.78px"><span class="m sa">0012F93C</span><span class="m sv">0012FC14</span></div>
<div class="r" style="top:664.83px"><span class="m sa">0012F940</span><span class="m sv">00000000</span></div>
<div class="r" style="top:678.87px"><span class="m sa">0012F944</span><span class="m sv">FFFFFFFF</span></div>
<div class="r" style="top:692.91px"><span class="m sa">0012F948</span><span class="m sv">0058CE68</span></div>
<div class="r" style="top:706.96px"><span class="m sa">0012F94C</span><span class="m sv">00000000</span></div>
<div class="r" style="top:721.0px"><span class="m sa">0012F950</span><span class="m sv">00000000</span></div>
<div class="r" style="top:735.05px"><span class="m sa">0012F954</span><span class="m sv">00000000</span></div>
<div class="r" style="top:749.1px"><span class="m sa">0012F958</span><span class="m sv">00000000</span></div>
<div class="r" style="top:763.14px"><span class="m sa">0012F95C</span><span class="m sv">00000000</span></div>
<div class="r" style="top:777.19px"><span class="m sa">0012F960</span><span class="m sv">00000000</span></div>
<div class="r" style="top:791.23px"><span class="m sa">0012F964</span><span class="m sv">00000000</span></div>
<div class="r" style="top:805.28px"><span class="m sa">0012F968</span><span class="m sv">00000000</span></div>
<div class="r" style="top:819.32px"><span class="m sa">0012F96C</span><span class="m sv">00000000</span></div>
<div class="r" style="top:833.37px"><span class="m sa">0012F970</span><span class="m sv">00000000</span></div>
<div class="vl" style="left:72.5px;top:594px;height:260px;background:#d0d0d0"></div><div class="vl" style="left:153.8px;top:594px;height:260px;background:#e0e0e0"></div>
<svg class="abs" style="left:158px;top:594px" width="8" height="28" viewBox="0 0 8 28"><path d="M2 0 V23.5 H6" fill="none" stroke="#e0e0e0" stroke-width="1.5"/></svg>
</div></div>
<div class="abs" style="left:0;top:848.3px;width:1690px;height:5px;background:#f0f0f0;border-top:1px solid #d8d8d8"></div>
<div class="abs" style="left:296px;top:851.5px;width:202px;height:3px;background:#a8a8a8;border-radius:2px 2px 0 0"></div>
</body></html>
